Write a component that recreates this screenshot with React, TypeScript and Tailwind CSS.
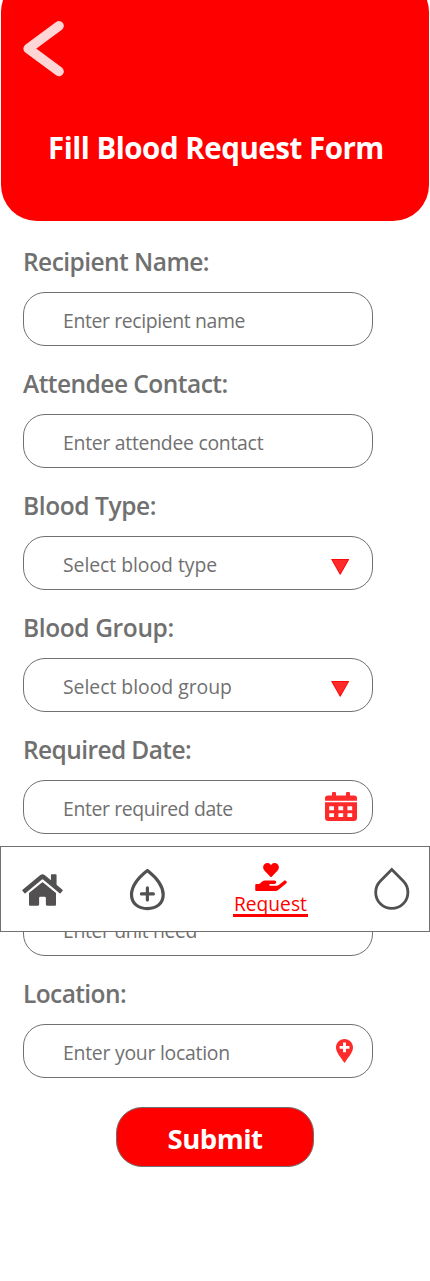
import React from "react";
import { FaHome, FaHandHoldingHeart } from "react-icons/fa";

function TriangleIcon() {
  return (
    <svg width="19" height="17" viewBox="0 0 19 17">
      <path d="M0.2 0H18.2L9.2 15.9Z" fill="#ff2a2a" />
      <path d="M0.8 0.5H17.6L9.2 15.2Z" fill="none" stroke="#f00" strokeWidth="0.8" />
    </svg>
  );
}

function CalendarIcon() {
  return (
    <svg width="32" height="29" viewBox="0 0 32 29" fill="#ff2a2a">
      <path d="M3 3.5H7V1Q7 0 8 0H10Q11 0 11 1V3.5H21V1Q21 0 22 0H24Q25 0 25 1V3.5H29Q32 3.5 32 6.3V8.7H0V6.3Q0 3.5 3 3.5Z" />
      <path
        fillRule="evenodd"
        d="M0 10.2H32V26Q32 29 29 29H3Q0 29 0 26ZM4.2 14.3V18.2H9V14.3ZM13.4 14.3V18.2H18.2V14.3ZM22.4 14.3V18.2H27.2V14.3ZM4.2 21.2V25H9V21.2ZM13.4 21.2V25H18.2V21.2ZM22.4 21.2V25H27.2V21.2Z"
      />
    </svg>
  );
}

function PinIcon() {
  return (
    <svg width="17" height="24" viewBox="0 0 17 24">
      <path d="M8.5 0C3.8 0 0 3.8 0 8.4C0 13 4.2 17.6 8.5 24C12.8 17.6 17 13 17 8.4C17 3.8 13.2 0 8.5 0Z" fill="#ff2a2a" />
      <path d="M8.5 3.5V13.3M3.6 8.4H13.4" stroke="#fff" strokeWidth="2.9" />
    </svg>
  );
}

type FieldProps = {
  label: string;
  labelClass: string;
  placeholder: string;
  textClass: string;
  icon?: React.ReactNode;
  iconClass?: string;
};

function Field({ label, labelClass, placeholder, textClass, icon, iconClass = "" }: FieldProps) {
  return (
    <div className="h-[122px]">
      <div className={`h-[54px] whitespace-nowrap text-[24.5px] leading-[47px] font-semibold ${labelClass}`}>{label}</div>
      <div className="flex h-[54px] w-[350px] items-start justify-between rounded-[22px] border border-[#707070] bg-white pl-[39px]">
        <span className={`whitespace-nowrap text-[19.4px] leading-[56px] ${textClass}`}>{placeholder}</span>
        {icon && <span className={iconClass}>{icon}</span>}
      </div>
    </div>
  );
}

export default function App() {
  return (
    <div className="relative h-[1281px] w-[430px] overflow-hidden bg-white font-['Open_Sans','Noto_Sans',sans-serif] text-[#707070]">
      <header className="mx-px -mt-[24px] h-[245px] rounded-[36px] bg-[#f00] pt-[44px]">
        <svg className="ml-[21px]" width="44" height="58" viewBox="0 0 44 58">
          <path d="M37 5.9L6.2 28.7L37 51.4" fill="none" stroke="#ffd6d6" strokeWidth="9.6" strokeLinecap="round" strokeLinejoin="round" />
        </svg>
        <h1 className="mt-[49px] ml-[47px] whitespace-nowrap text-[29.5px] leading-[41px] font-bold tracking-[-0.48px] text-white">Fill Blood Request Form</h1>
      </header>

      <main className="pt-[17px] pl-[23px]">
        <Field label="Recipient Name:" labelClass="tracking-[-0.55px]" placeholder="Enter recipient name" textClass="tracking-[-0.37px]" />
        <Field label="Attendee Contact:" labelClass="tracking-[-0.53px]" placeholder="Enter attendee contact" textClass="tracking-[-0.27px]" />
        <Field label="Blood Type:" labelClass="tracking-[-0.4px]" placeholder="Select blood type" textClass="tracking-[-0.05px]" icon={<TriangleIcon />} iconClass="mt-[22px] mr-[22px]" />
        <Field label="Blood Group:" labelClass="tracking-[-0.38px]" placeholder="Select blood group" textClass="tracking-[-0.03px]" icon={<TriangleIcon />} iconClass="mt-[22px] mr-[22px]" />
        <Field label="Required Date:" labelClass="tracking-[-0.6px]" placeholder="Enter required date" textClass="tracking-[-0.38px]" icon={<CalendarIcon />} iconClass="mt-[11px] mr-[15px]" />
        <Field label="Unit Need:" labelClass="tracking-[-0.5px]" placeholder="Enter unit need" textClass="tracking-[-0.37px]" />
        <Field label="Location:" labelClass="tracking-[-0.6px]" placeholder="Enter your location" textClass="tracking-[-0.25px]" icon={<PinIcon />} iconClass="mt-[14px] mr-[19px]" />
        <button className="mt-[15px] ml-[93px] flex h-[60px] w-[198px] justify-center rounded-[26px] border border-[#707070] bg-[#f00] text-[27.5px] leading-[62px] font-bold tracking-[-0.5px] text-white">
          Submit
        </button>
      </main>

      <nav className="absolute top-[846px] left-0 flex h-[86px] w-[430px] items-start border border-[#707070] bg-white">
        <FaHome className="mt-[25px] ml-[21px] h-[36px] w-[41px] text-[#525050]" />
        <svg className="mt-[21px] ml-[66px]" width="37" height="43" viewBox="0 0 37 43" fill="none" stroke="#525050" strokeWidth="3.2">
          <path d="M18.4 2.6C10.5 8.8 2.5 17.5 2.5 26.8C2.5 35.3 9.2 40.6 18.4 40.6C27.6 40.6 34.2 35.3 34.2 26.8C34.2 17.5 26.3 8.8 18.4 2.6Z" strokeLinejoin="round" />
          <path d="M18.4 19.9V31.9M12.4 25.9H24.4" strokeLinecap="round" />
        </svg>
        <div className="mt-[16px] ml-[67px] flex w-[75px] flex-col items-center text-[#f00]">
          <FaHandHoldingHeart className="h-[28px] w-[32px]" />
          <span className="h-[26px] w-[75px] border-b-[3px] border-[#f00] pl-[1px] text-[19.2px] leading-[26px] font-medium">Request</span>
        </div>
        <svg className="mt-[20px] ml-[65px]" width="37" height="44" viewBox="0 0 37 44">
          <path d="M18.8 2.6L7.4 14A16.1 16.1 0 1 0 30.2 14Z" fill="none" stroke="#525050" strokeWidth="2.8" />
        </svg>
      </nav>
    </div>
  );
}
